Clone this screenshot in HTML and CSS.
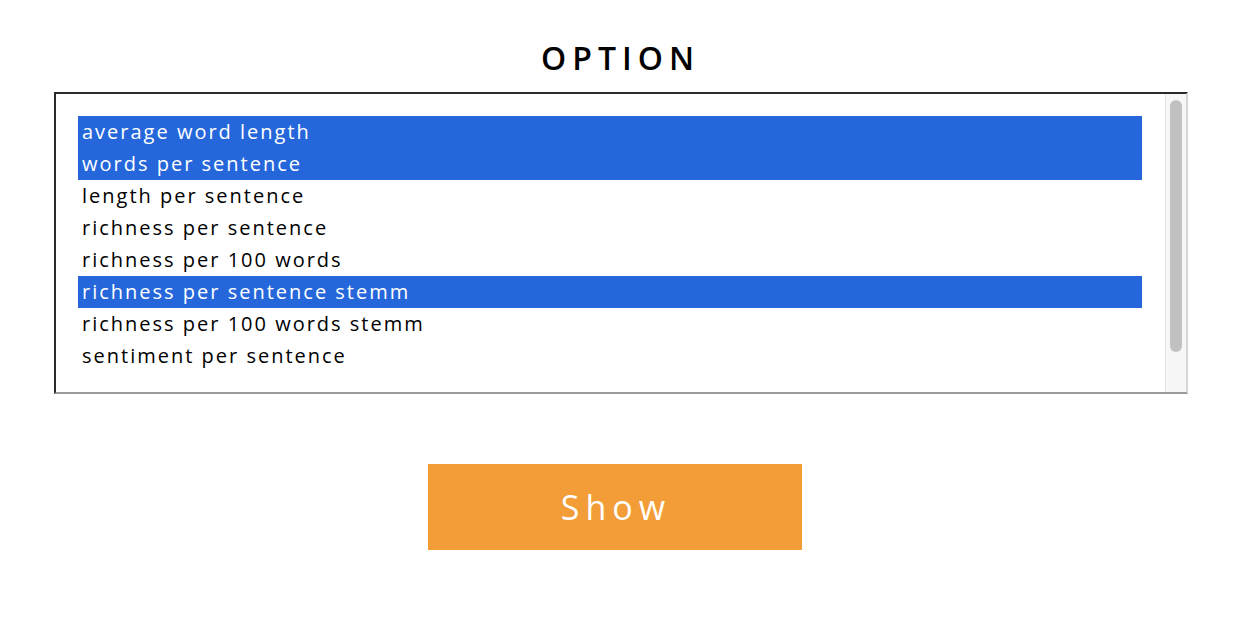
FILE: index.html
```html
<!DOCTYPE html>
<html>
<head>
<meta charset="utf-8">
<link rel="stylesheet" href="styles.css">
</head>
<body>
<div class="page">
  <h1 class="title">OPTION</h1>
  <div class="listbox">
    <div class="options">
      <div class="opt sel">average word length</div>
      <div class="opt sel">words per sentence</div>
      <div class="opt">length per sentence</div>
      <div class="opt">richness per sentence</div>
      <div class="opt">richness per 100 words</div>
      <div class="opt sel">richness per sentence stemm</div>
      <div class="opt">richness per 100 words stemm</div>
      <div class="opt">sentiment per sentence</div>
    </div>
    <div class="track"><div class="thumb"></div></div>
  </div>
  <div class="actions">
    <button class="show">Show</button>
  </div>
</div>
</body>
</html>
```

FILE: styles.css
```css
html, body {
  margin: 0;
  padding: 0;
  background: #fff;
}
body {
  font-family: "Open Sans", "DejaVu Sans", sans-serif;
  color: #000;
}
.page {
  width: 1134px;
  margin-left: 54px;
  padding-top: 38px;
}
.title {
  margin: 0 0 14px 0;
  text-align: center;
  font-size: 32px;
  font-weight: 600;
  letter-spacing: 6px;
  line-height: 40px;
  padding-right: 1px;
}
.listbox {
  height: 298px;
  border-top: 2px solid #2a2a2a;
  border-left: 2px solid #2a2a2a;
  border-right: 2px solid #d6d6d6;
  border-bottom: 2px solid #9a9a9a;
  display: flex;
}
.options {
  flex: 1;
  padding: 22px 23px 0 22px;
}
.opt {
  height: 32px;
  line-height: 32px;
  font-size: 20px;
  letter-spacing: 2px;
  padding-left: 4px;
  white-space: nowrap;
}
.opt.sel {
  background: #2567db;
  color: #fff;
}
.track {
  width: 20px;
  background: #f7f7f7;
  border-left: 1px solid #e6e6e6;
  display: flex;
  justify-content: center;
  padding-top: 6px;
}
.thumb {
  width: 12px;
  height: 252px;
  background: #c1c1c1;
  border-radius: 6px;
}
.actions {
  padding-top: 70px;
  padding-left: 374px;
}
.show {
  display: block;
  width: 374px;
  height: 86px;
  border: 0;
  border-radius: 0;
  background: #f29d38;
  color: #fff;
  font-family: "Open Sans", "DejaVu Sans", sans-serif;
  font-size: 34px;
  letter-spacing: 6px;
  padding: 0 0 0 2px;
}
```
